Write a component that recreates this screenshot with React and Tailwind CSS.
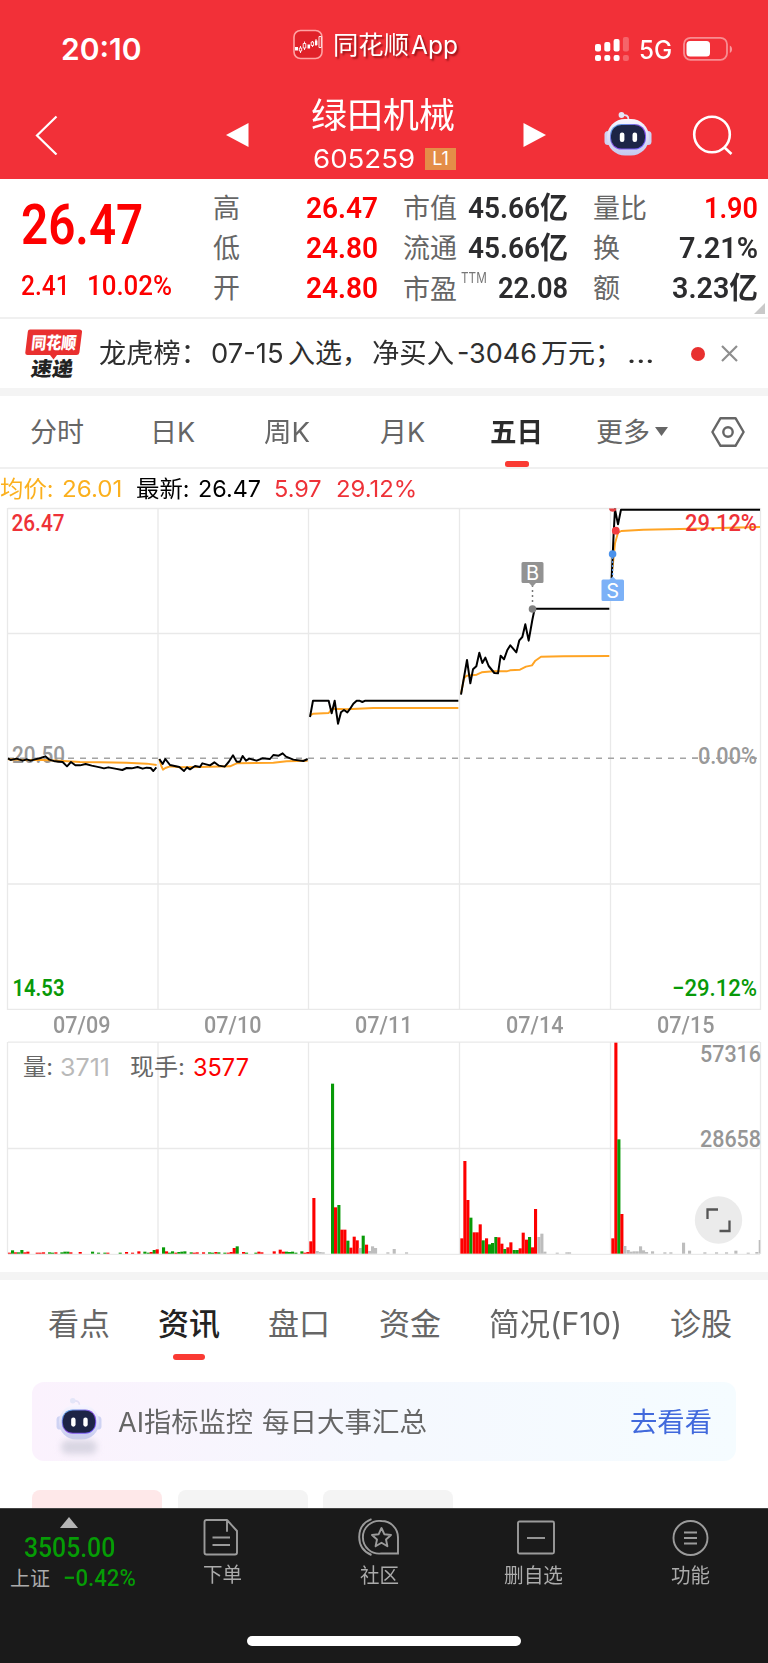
import { useLayoutEffect, useRef, useState } from 'react';

const SANS = "font-['Inter','Noto_Sans_CJK_SC',sans-serif]";
const DIN = "font-['Roboto','Noto_Sans_CJK_SC',sans-serif]";

// One line of text condensed or widened to the given width.
function Fit({ w, className = '', children }) {
  const ref = useRef(null);
  const [scale, setScale] = useState(1);
  useLayoutEffect(() => {
    const natural = ref.current.offsetWidth;
    if (natural) setScale(w / natural);
  }, [w]);
  return (
    <span className={`block shrink-0 whitespace-nowrap ${className}`} style={{ width: w }}>
      <span ref={ref} className="inline-block origin-left" style={{ transform: `scaleX(${scale})` }}>
        {children}
      </span>
    </span>
  );
}

function Robot({ className }) {
  return (
    <svg className={className} viewBox="0 0 48 46" fill="none">
      <defs>
        <linearGradient id="shell" x1="0" y1="0" x2="0" y2="1">
          <stop offset="0" stopColor="#f8f6ff" />
          <stop offset="1" stopColor="#c4c9ee" />
        </linearGradient>
        <linearGradient id="rim" x1="0" y1="0" x2="1" y2="1">
          <stop offset="0" stopColor="#55b9e8" />
          <stop offset="0.5" stopColor="#8a4be0" />
          <stop offset="1" stopColor="#6c63ff" />
        </linearGradient>
      </defs>
      <path d="M18 4.500c4-1 6.500 0 6.500 4" stroke="#e4e1f6" strokeWidth="1.800" />
      <circle cx="17.500" cy="4" r="2.900" fill="#e4e6f8" />
      <rect x="0.500" y="20" width="7" height="14" rx="3.500" fill="#cfd3f3" />
      <rect x="40.500" y="20" width="7" height="14" rx="3.500" fill="#cfd3f3" />
      <rect x="3" y="8" width="42" height="36.500" rx="18" fill="url(#shell)" />
      <rect x="6" y="13" width="36" height="25.500" rx="11.500" fill="url(#rim)" />
      <rect x="7" y="14" width="34" height="23.500" rx="10.500" fill="#1d2446" />
      <rect x="15.800" y="21.500" width="4.600" height="9.500" rx="2.200" fill="#fff" />
      <rect x="28.500" y="21.500" width="4.600" height="9.500" rx="2.200" fill="#fff" />
    </svg>
  );
}

function StatusBar() {
  return (
    <div className="flex h-[92px] items-start">
      <Fit w={81} className="ml-[61px] mt-[30px] text-[30px] font-semibold leading-[38px]">20:10</Fit>
      <svg className="ml-[151px] mt-[29px] h-[31px] w-[31px]" viewBox="0 0 31 31" fill="none">
        <rect x="1" y="1.500" width="28" height="28" rx="6.500" fill="#e02129" stroke="#ffa3a3" strokeWidth="1.600" />
        <path d="M7.500 17v7M11.500 12.500v8.500M19.500 12v6M23 10v7" stroke="#fff" strokeWidth="0.900" />
        <path d="M6.300 19h2.400v3H6.300zM10.200 14.500h2.600v4.500h-2.600zM18.200 13h2.400v3.500h-2.400zM26 7.500h2.300v11H26z" fill="#e02129" stroke="#fff" strokeWidth="0.900" />
        <path d="M2 18h3v3.500H2zM14.500 15.500h2.600v4h-2.600zM22 11.500h2.400v4.500H22z" fill="#fff" />
      </svg>
      <Fit w={76} className="ml-[9px] mt-[26px] text-[25px] leading-[38px] [text-shadow:2px_2px_2px_rgba(90,0,0,0.6)]">同花顺</Fit>
      <Fit w={47} className="ml-[2px] mt-[26px] text-[25px] leading-[38px] [text-shadow:2px_2px_2px_rgba(90,0,0,0.6)]">App</Fit>
      <svg className="ml-[137px] mt-[36px] h-[26px] w-[35px]" viewBox="0 0 35 26" fill="#fff">
        <rect x="0" y="8" width="6" height="7.500" rx="2" />
        <rect x="9.300" y="6" width="6" height="9.500" rx="2" />
        <rect x="18.600" y="3" width="6" height="12.500" rx="2" />
        <rect x="27.900" y="1" width="6" height="14.500" rx="2" opacity="0.25" />
        <rect x="0" y="19" width="6" height="6" rx="2" />
        <rect x="9.300" y="19" width="6" height="6" rx="2" />
        <rect x="18.600" y="19" width="6" height="6" rx="2" />
        <rect x="27.900" y="19" width="6" height="6" rx="2" opacity="0.25" />
      </svg>
      <Fit w={33} className="ml-[9px] mt-[31px] text-[25px] font-medium leading-[38px]">5G</Fit>
      <svg className="ml-[11px] mt-[35px] h-[26px] w-[50px]" viewBox="0 0 50 26" fill="none">
        <rect x="1" y="2.800" width="43" height="22" rx="6.500" stroke="#fff" strokeOpacity="0.45" strokeWidth="1.800" />
        <rect x="3.500" y="6" width="23.500" height="15.500" rx="3.500" fill="#fff" />
        <path d="M46.800 10.500c3 1.500 3 6 0 7.500z" fill="#fff" fillOpacity="0.5" />
      </svg>
    </div>
  );
}

function TitleBar() {
  return (
    <div className="flex h-[87px] items-start">
      <svg className="ml-[35px] mt-[23px] h-[40px] w-[24px]" viewBox="0 0 24 40" fill="none">
        <path d="M21.500 1.500L2 20.500 21.500 39.500" stroke="#fff" strokeWidth="2.200" />
      </svg>
      <svg className="ml-[166px] mt-[30px] h-[26px] w-[25px]" viewBox="0 0 25 26" fill="#fff">
        <path d="M1 13L23.500 1v24z" />
      </svg>
      <div className="ml-[61px] flex w-[146px] flex-col">
        <Fit w={144} className="mt-px text-[35px] leading-[44px]">绿田机械</Fit>
        <div className="flex items-start gap-[10px] pl-[2px]">
          <Fit w={102} className="mt-[9px] text-[26px] leading-[26px]">605259</Fit>
          <div className="mt-[11px] flex h-[22px] w-[31px] items-center justify-center bg-[#e48d48] text-[18px] leading-none">L1</div>
        </div>
      </div>
      <svg className="ml-[65px] mt-[30px] h-[26px] w-[25px]" viewBox="0 0 25 26" fill="#fff">
        <path d="M24 13L1.500 1v24z" />
      </svg>
      <Robot className="ml-[57px] mt-[19px] h-[46px] w-[48px]" />
      <svg className="ml-[40px] mt-[23px] h-[41px] w-[42px]" viewBox="0 0 42 41" fill="none" stroke="#fff" strokeWidth="2.600">
        <circle cx="20" cy="19.500" r="17.800" />
        <path d="M32.500 32.500l7 6.500" />
      </svg>
    </div>
  );
}

function Stat({ label, lw, value, vw, red, note, className = '' }) {
  return (
    <div className={`flex h-[40px] items-center justify-between ${className}`}>
      <div className="flex items-center pt-[4px]">
        <Fit w={lw} className={`text-[27px] text-[#666] ${note ? 'mt-[2px]' : ''}`}>{label}</Fit>
        {note && <Fit w={26} className="-mt-[24px] ml-[4px] text-[14px] text-[#777]">{note}</Fit>}
      </div>
      <Fit w={vw} className={`${DIN} text-[30px] font-semibold ${red ? 'text-[#fd0000]' : 'text-[#2c2c2e]'}`}>{value}</Fit>
    </div>
  );
}

function Quote() {
  return (
    <section className="flex h-[140px] items-start border-b-2 border-[#f0f0f0]">
      <div className={`${DIN} ml-[21px] w-[192px] text-[#fd0000]`}>
        <Fit w={122} className="mt-[12px] text-[55px] font-semibold leading-[68px]">26.47</Fit>
        <div className="mt-[12px] flex gap-[17px] text-[28px] font-medium leading-[30px]">
          <Fit w={49}>2.41</Fit>
          <Fit w={85}>10.02%</Fit>
        </div>
      </div>
      <div className="mt-[8px] w-[165px]">
        <Stat label="高" lw={27} value="26.47" vw={72} red />
        <Stat label="低" lw={27} value="24.80" vw={72} red />
        <Stat label="开" lw={27} value="24.80" vw={72} red />
      </div>
      <div className="ml-[25px] mt-[8px] w-[165px]">
        <Stat label="市值" lw={54} value="45.66亿" vw={100} />
        <Stat label="流通" lw={54} value="45.66亿" vw={100} />
        <Stat label="市盈" lw={54} value="22.08" vw={70} note="TTM" />
      </div>
      <div className="ml-[25px] mt-[8px] w-[165px]">
        <Stat label="量比" lw={54} value="1.90" vw={54} red />
        <Stat label="换" lw={27} value="7.21%" vw={79} />
        <Stat label="额" lw={27} value="3.23亿" vw={86} />
      </div>
      <svg className="-ml-[4px] mt-[124px] h-[11px] w-[11px] shrink-0" viewBox="0 0 11 11"><path d="M11 0v11H0z" fill="#c9c9c9" /></svg>
    </section>
  );
}

function News() {
  return (
    <section className="flex h-[69px] items-center text-[27px] text-[#2f2f2f]">
      <div className="ml-[24px] w-[58px]">
        <svg className="h-[52px] w-[58px]" viewBox="0 0 58 52">
          <path d="M6 1.500h49.500q2.800 0 2.500 2.500l-2.600 20.500q-.4 2.600-3 2.600H33l-3.500 4.500-3.500-4.500H3.500Q1 27.100 1.300 24.500L3.800 3.700Q4 1.500 6 1.500z" fill="#e9302f" />
          <text x="9" y="20.800" transform="skewX(-6)" fontSize="17" fontWeight="900" fill="#fff" textLength="45" lengthAdjust="spacingAndGlyphs">同花顺</text>
          <text x="13" y="48" transform="skewX(-8)" fontSize="20" fontWeight="900" fill="#222" textLength="42" lengthAdjust="spacingAndGlyphs">速递</text>
        </svg>
      </div>
      <Fit w={109} className="ml-[17px] mt-[2px]">龙虎榜：</Fit>
      <Fit w={73} className="ml-[3px] mt-[2px]">07-15</Fit>
      <Fit w={54} className="ml-[4px] mt-[2px]">入选</Fit>
      <Fit w={27} className="mt-[2px]">，</Fit>
      <Fit w={82} className="ml-[3px] mt-[2px]">净买入</Fit>
      <Fit w={80} className="ml-[3px] mt-[2px]">-3046</Fit>
      <Fit w={54} className="ml-[4px] mt-[2px]">万元</Fit>
      <Fit w={27} className="mt-[2px]">；</Fit>
      <Fit w={27} className="ml-[5px] mt-[2px]">...</Fit>
      <div className="ml-[37px] h-[14px] w-[14px] rounded-full bg-[#e8302f]" />
      <svg className="ml-[16px] h-[17px] w-[17px]" viewBox="0 0 17 17" stroke="#8e8e8e" strokeWidth="2.200"><path d="M1 1l15 15M16 1L1 16" /></svg>
    </section>
  );
}

function Periods() {
  return (
    <nav className="flex h-[73px] items-center border-b-2 border-[#f0f0f0] text-[27px] text-[#666]">
      <Fit w={54} className="ml-[30px] pt-[3px]">分时</Fit>
      <Fit w={45} className="ml-[66px] pt-[3px]">日K</Fit>
      <Fit w={46} className="ml-[69px] pt-[3px]">周K</Fit>
      <Fit w={45} className="ml-[70px] pt-[3px]">月K</Fit>
      <div className="ml-[65px] flex h-full flex-col items-center">
        <Fit w={53} className="pt-[17px] font-semibold text-[#2b2b2b]">五日</Fit>
        <div className="mt-auto h-[6px] w-[24px] rounded-[2.5px] bg-[#fa3a33]" />
      </div>
      <Fit w={54} className="ml-[53px] pt-[3px]">更多</Fit>
      <svg className="ml-[5px] h-[9px] w-[13px]" viewBox="0 0 13 9"><path d="M0 0h13L6.500 9z" fill="#666" /></svg>
      <svg className="ml-[43px] h-[32px] w-[34px]" viewBox="0 0 34 32" fill="none" stroke="#666" strokeWidth="2.400">
        <path d="M9.500 2.200h15L32.600 16l-8.100 13.800h-15L1.400 16z" strokeLinejoin="round" />
        <circle cx="17" cy="16" r="4.700" />
      </svg>
    </nav>
  );
}

function Legend() {
  return (
    <div className="flex h-[38px] items-center pt-[2px] text-[23px]">
      <Fit w={54} className="text-[#fbb01e]">均价:</Fit>
      <Fit w={60} className="ml-[8px] text-[#fbb01e]">26.01</Fit>
      <Fit w={54} className="ml-[14px] text-black">最新:</Fit>
      <Fit w={63} className="ml-[8px] text-black">26.47</Fit>
      <Fit w={48} className="ml-[13px] text-[#ee3238]">5.97</Fit>
      <Fit w={81} className="ml-[14px] text-[#ee3238]">29.12%</Fit>
    </div>
  );
}

function ChartText({ x, y, w, fill, weight = 500, size = 24, children }) {
  return (
    <text x={x} y={y} fill={fill} fontSize={size} fontWeight={weight} textLength={w} lengthAdjust="spacingAndGlyphs" className={DIN}>{children}</text>
  );
}

function PriceChart() {
  return (
    <svg className="block h-[503px] w-[768px]" viewBox="0 507 768 503" fill="none">
      <path d="M8 508.500H760M8 633.500H760M8 884H760M8 1009.500H760M7.500 508V1010M158 508V1010M308.500 508V1010M459.500 508V1010M610.500 508V1010M760.500 508V1010" stroke="#e9e9e9" strokeWidth="1.300" />
      <path d="M8 758.300H700" stroke="#a4a4a4" strokeWidth="1.500" strokeDasharray="6 6" />
      <ChartText x="12" y="762.500" w="53" fill="#999">20.50</ChartText>
      <g transform="translate(0 680) scale(.33333)" stroke="#ffa424" strokeWidth="5.800" strokeLinejoin="round">
        <path d="M24 238L70 240 130 240 190 243 240 246 300 247 380 248 440 251 470 255M478 238L484 258 489 269 496 264 510 259 540 262 600 261 690 259 710 250 820 248 860 244 923 242" />
      </g>
      <g transform="translate(0 680) scale(.33333)" stroke="#000" strokeWidth="5.800" strokeLinejoin="round">
        <path d="M24 235L32 240 50 236 68 242 80 238 92 242 105 238 122 234 136 229 148 239 165 244 188 246 201 259 213 246 226 256 240 256 257 252 275 257 300 262 312 265 325 262 345 266 367 270 380 264 395 265 413 261 428 266 440 263 452 264 460 273 469 262M478 237L488 252 496 237 510 255 524 258 538 261 552 273 561 262 570 268 585 258 600 261 607 250 630 256 643 247 657 257 674 260 686 246 699 226 710 245 720 245 728 228 738 242 748 236 770 242 787 235 810 237 820 225 836 227 848 220 858 230 880 239 910 243 923 237" />
      </g>
      <g transform="translate(280 500) scale(.33333)" stroke="#ffa424" strokeWidth="5.800" strokeLinejoin="round">
        <path d="M90 646L100 641 146 639 156 626 200 628 280 624 535 624M543 580L552 535 560 527 590 524 605 517 640 514 680 514 690 511 720 509 738 500 756 496 766 482 783 470 850 469 988 468M995 230L1005 130 1014 98 1024 93 1090 89 1200 87 1440 81" />
      </g>
      <ChartText x="685" y="530.500" w="72" fill="#ee3238">29.12%</ChartText>
      <path d="M692 758.300H757" stroke="#a4a4a4" strokeWidth="1.500" strokeDasharray="6 6" />
      <ChartText x="698" y="763.500" w="59" fill="#999">0.00%</ChartText>
      <ChartText x="11.500" y="530.500" w="53" fill="#ee3238">26.47</ChartText>
      <ChartText x="12.500" y="996" w="52" fill="#089908" weight={600}>14.53</ChartText>
      <ChartText x="672" y="996" w="85" fill="#089908">−29.12%</ChartText>
      <g transform="translate(280 500) scale(.33333)" stroke="#000" strokeWidth="6" strokeLinejoin="round">
        <path d="M90 651L99 602 146 602 155 640 164 602 174 671 183 637 192 630 202 637 210 627 220 611 230 602 238 602 247 606 256 602 535 602M543 584L561 480 571 550 579 508 589 499 598 458 607 489 616 473 626 498 643 519 654 520 662 467 672 478 682 450 691 436 709 457 718 421 727 411 736 373 746 422 757 360 764 326 988 326M995 235L1001 100 1005 28 1014 73 1023 29 1440 29" />
      </g>
      <path d="M532.500 585V603" stroke="#777" strokeWidth="1.500" strokeDasharray="2 3" />
      <circle cx="532.500" cy="609" r="3.800" fill="#808080" />
      <path d="M523 562h19q1.500 0 1.500 1.500v18q0 1.500-1.500 1.500h-6l-3.500 3.500-3.500-3.500H523q-1.500 0-1.500-1.500v-18q0-1.500 1.500-1.500z" fill="#929292" />
      <text x="532.500" y="580" textAnchor="middle" fontSize="20" fontWeight="400" fill="#fff">B</text>
      <path d="M612.600 557V577" stroke="#498fe9" strokeWidth="1.300" strokeDasharray="2 2" />
      <circle cx="612.600" cy="554" r="3.800" fill="#4b92eb" />
      <circle cx="615.800" cy="530.700" r="3.900" fill="#f23c40" />
      <path d="M609 508.500h7.500a3.800 3.800 0 0 1-7.500 0z" fill="#e34042" />
      <path d="M603 579.500h6.500l3.200-3 3.200 3h6.600q1.500 0 1.500 1.500v18.500q0 1.500-1.500 1.500H603q-1.500 0-1.500-1.500V581q0-1.500 1.500-1.500z" fill="#7cb1f7" />
      <text x="612.700" y="597.700" textAnchor="middle" fontSize="20" fontWeight="400" fill="#fff">S</text>
    </svg>
  );
}

function Dates() {
  return (
    <div className={`${DIN} flex h-[31px] items-center gap-[93.500px] pb-[2px] pl-[53px] text-[24px] font-medium text-[#969696]`}>
      {['07/09', '07/10', '07/11', '07/14', '07/15'].map((d) => <Fit key={d} w={57.5}>{d}</Fit>)}
    </div>
  );
}

// [left, top, colour]: thirds of a pixel, top measured from y = 970.
const BARS = [
  [24, 848, 'r'], [33, 841, 'g'], [42, 847, 'r'], [51, 847, 'g'], [61, 840, 'g'], [70, 847, 'r'], [79, 845, 'r'], [107, 848, 'r'], [116, 848, 'r'], [126, 847, 'r'], [144, 847, 'g'], [153, 848, 'g'], [163, 847, 'r'], [181, 847, 'g'], [190, 845, 'g'], [199, 845, 'g'], [208, 847, 'r'], [236, 846, 'r'], [273, 845, 'g'], [291, 848, 'g'], [310, 848, 'g'], [319, 848, 'r'], [356, 848, 'g'], [375, 846, 'r'], [393, 848, 'r'], [412, 844, 'r'], [430, 845, 'g'], [440, 848, 'g'], [449, 846, 'r'], [458, 840, 'g'], [467, 838, 'r'],
  [486, 832, 'g'], [495, 844, 'r'], [504, 848, 'g'], [513, 844, 'g'], [523, 848, 'r'], [532, 846, 'g'], [541, 845, 'g'], [550, 844, 'g'], [569, 847, 'g'], [578, 848, 'r'], [587, 847, 'r'], [606, 847, 'r'], [624, 847, 'g'], [633, 848, 'g'], [643, 846, 'r'], [652, 847, 'g'], [670, 848, 'g'], [680, 848, 'r'], [689, 846, 'r'], [698, 834, 'r'], [707, 829, 'g'], [726, 846, 'r'], [735, 848, 'g'], [763, 848, 'g'], [772, 845, 'r'], [781, 847, 'r'], [818, 844, 'r'], [836, 839, 'r'], [846, 845, 'r'], [855, 845, 'g'], [864, 846, 'g'], [873, 845, 'g'], [883, 848, 'g'], [901, 844, 'g'], [910, 848, 'r'], [919, 846, 'r'],
  [928, 814, 'r'], [937, 684, 'r'], [947, 843, 'x'], [956, 846, 'x'], [965, 847, 'x'], [993, 341, 'g'], [1002, 712, 'r'], [1012, 705, 'g'], [1021, 779, 'r'], [1030, 779, 'r'], [1039, 812, 'g'], [1048, 833, 'r'], [1058, 800, 'r'], [1067, 811, 'r'], [1076, 834, 'x'], [1085, 797, 'g'], [1095, 824, 'r'], [1104, 843, 'x'], [1113, 829, 'x'], [1122, 834, 'x'], [1159, 847, 'x'], [1178, 837, 'x'], [1215, 847, 'x'],
  [1381, 805, 'r'], [1390, 573, 'r'], [1399, 690, 'r'], [1408, 743, 'g'], [1418, 787, 'r'], [1427, 787, 'r'], [1436, 763, 'r'], [1445, 811, 'g'], [1455, 805, 'r'], [1464, 823, 'g'], [1473, 819, 'g'], [1483, 801, 'g'], [1492, 802, 'r'], [1501, 821, 'r'], [1510, 837, 'g'], [1519, 832, 'r'], [1528, 817, 'r'], [1538, 840, 'g'], [1547, 840, 'g'], [1556, 835, 'r'], [1565, 788, 'r'], [1575, 809, 'r'], [1584, 801, 'g'], [1593, 832, 'r'], [1602, 717, 'r'], [1612, 801, 'x'], [1621, 791, 'x'], [1630, 845, 'x'], [1667, 848, 'x'], [1696, 847, 'x'], [1704, 847, 'x'],
  [1834, 805, 'r'], [1843, 218, 'r'], [1852, 508, 'g'], [1861, 732, 'r'], [1870, 828, 'x'], [1880, 840, 'x'], [1889, 845, 'x'], [1898, 844, 'x'], [1907, 844, 'x'], [1917, 829, 'x'], [1926, 841, 'x'], [1935, 846, 'x'], [1953, 844, 'x'], [1990, 847, 'x'], [2008, 847, 'x'], [2046, 818, 'x'], [2064, 842, 'x'], [2110, 847, 'x'], [2145, 847, 'x'], [2175, 847, 'x'], [2203, 842, 'x'], [2240, 848, 'x'], [2266, 846, 'x'],
];
const BAR_COLOURS = { r: '#fd0000', g: '#089a08', x: '#bdbdbd' };

function VolumeChart() {
  return (
    <svg className="block h-[231px] w-[768px]" viewBox="0 1041 768 231" fill="none">
      <path d="M8 1042.200H760M8 1148.500H760M8 1254.300H760M7.500 1042V1254M158 1042V1254M308.500 1042V1254M459.500 1042V1254M610.500 1042V1254M760.500 1042V1254" stroke="#e9e9e9" strokeWidth="1.300" />
      {BARS.map(([x, top, c], i) => (
        <rect key={i} x={x / 3} y={970 + top / 3} width="3.100" height={(851 - top) / 3} fill={BAR_COLOURS[c]} />
      ))}
      <rect x="758.700" y="1240" width="1.500" height="13.500" fill="#bdbdbd" />
      <text x="23" y="1075" fontSize="23" fill="#666" textLength="30" lengthAdjust="spacingAndGlyphs">量:</text>
      <text x="60" y="1075.500" fontSize="24" fill="#b9b9b9" textLength="50" lengthAdjust="spacingAndGlyphs">3711</text>
      <text x="130" y="1075" fontSize="23" fill="#666" textLength="55" lengthAdjust="spacingAndGlyphs">现手:</text>
      <text x="193" y="1075.500" fontSize="24" fill="#fd0000" textLength="56" lengthAdjust="spacingAndGlyphs">3577</text>
      <ChartText x="700" y="1061.500" w="61" fill="#969696">57316</ChartText>
      <ChartText x="700" y="1147" w="61" fill="#969696">28658</ChartText>
      <circle cx="718.500" cy="1220" r="23.700" fill="#ebebeb" />
      <path d="M707.500 1219v-9.500h10.500M719.500 1231h10v-10.500" stroke="#555" strokeWidth="2.300" />
    </svg>
  );
}

function Sections() {
  return (
    <nav className="flex h-[102px] items-start text-[31px] leading-[44px] text-[#666]">
      <Fit w={62} className="ml-[48px] mt-[22px]">看点</Fit>
      <div className="ml-[48px] mt-[22px] flex flex-col items-center">
        <Fit w={62} className="font-medium text-[#222]">资讯</Fit>
        <div className="mt-[8px] h-[6px] w-[32px] rounded-[3px] bg-[#fa3a33]" />
      </div>
      <Fit w={62} className="ml-[48px] mt-[22px]">盘口</Fit>
      <Fit w={62} className="ml-[49px] mt-[22px]">资金</Fit>
      <Fit w={133} className="ml-[48px] mt-[22px]">简况(F10)</Fit>
      <Fit w={62} className="ml-[48px] mt-[22px]">诊股</Fit>
    </nav>
  );
}

function Feed() {
  return (
    <section className="flex h-[126px] flex-col pl-[32px]">
      <div className="flex h-[79px] w-[704px] shrink-0 items-center rounded-[12px] bg-linear-to-r from-[#fbf2fd] via-[#f5f8fe] to-[#f5fcff] text-[27px]">
        <div className="ml-[24px] flex w-[46px] flex-col items-center pt-[7px]">
          <Robot className="h-[44px] w-[46px]" />
          <div className="-mt-px h-[14px] w-[36px] rounded-full bg-[#d9d6e3] blur-[3px]" />
        </div>
        <Fit w={135} className="ml-[16px] mt-[4px] text-[#666]">AI指标监控</Fit>
        <Fit w={165} className="ml-[9px] mt-[4px] text-[#666]">每日大事汇总</Fit>
        <Fit w={82} className="ml-[203px] mt-[4px] text-[#4169dc]">去看看</Fit>
      </div>
      <div className="mt-auto flex h-[18px] gap-[15.500px]">
        <div className="w-[130px] rounded-t-[8px] bg-[#fee8e9]" />
        <div className="w-[130px] rounded-t-[8px] bg-[#f4f4f4]" />
        <div className="w-[130px] rounded-t-[8px] bg-[#f4f4f4]" />
      </div>
    </section>
  );
}

function Dock() {
  return (
    <footer className="flex h-[155px] flex-col border-t border-[#444] bg-[#1a1a1a] text-[#ababab]">
      <div className="flex h-[127px] items-start">
        <div className="ml-[10px] flex w-[128px] flex-col">
          <svg className="ml-[50px] mt-[8px] h-[11px] w-[18px]" viewBox="0 0 18 11"><path d="M9 0l9 11H0z" fill="#b5b5b5" /></svg>
          <Fit w={91} className={`${DIN} ml-[14px] mt-[4px] text-[28px] font-medium leading-[32px] text-[#069c06]`}>3505.00</Fit>
          <div className="flex items-start leading-[30px]">
            <Fit w={40} className="text-[20px]">上证</Fit>
            <Fit w={73} className={`${DIN} -mt-px ml-[13px] text-[24px] font-medium text-[#069c06]`}>−0.42%</Fit>
          </div>
        </div>
        <div className="ml-[65px] mt-[9px] flex flex-col items-start gap-[5px]">
          <svg className="h-[38px] w-[36px]" viewBox="0 0 36 38" fill="none" stroke="#9b9b9b" strokeWidth="1.900">
            <path d="M24 2H3.500Q1.500 2 1.500 4V34.500Q1.500 36.500 3.500 36.500H32Q34 36.500 34 34.500V13zV13H24zM9.500 19.500H27M9.500 27H27" strokeLinejoin="round" />
          </svg>
          <Fit w={39} className="text-[20px] leading-[28px]">下单</Fit>
        </div>
        <div className="ml-[116px] mt-[9px] flex flex-col items-center gap-[6px]">
          <svg className="h-[38px] w-[42px]" viewBox="0 0 42 38" fill="none" stroke="#9b9b9b" strokeWidth="1.900">
            <path d="M13.500 1.200C5 4.500 1.200 11.500 1.200 19S5 33.500 13.500 37" />
            <path d="M23.500 3A16.400 16.400 0 1 0 23.500 35.500H40V19.500A16.400 16.400 0 0 0 23.500 3z" />
            <path d="M23.500 10l2.800 6.200 6.700.8-5 4.500 1.400 6.700-5.900-3.400-5.900 3.400 1.400-6.700-5-4.500 6.700-.8z" strokeLinejoin="round" />
          </svg>
          <Fit w={39} className="ml-px text-[20px] leading-[28px]">社区</Fit>
        </div>
        <div className="ml-[104px] mt-[11px] flex flex-col items-center gap-[7px]">
          <svg className="ml-[4px] h-[35px] w-[38px]" viewBox="0 0 38 35" fill="none" stroke="#9b9b9b" strokeWidth="1.900">
            <rect x="1" y="1.500" width="36" height="32" rx="1.500" /><path d="M10 18h18" />
          </svg>
          <Fit w={59} className="text-[20px] leading-[28px]">删自选</Fit>
        </div>
        <div className="ml-[108px] mt-[11px] flex flex-col items-center gap-[6px]">
          <svg className="h-[36px] w-[37px]" viewBox="0 0 37 36" fill="none" stroke="#9b9b9b" strokeWidth="1.900">
            <circle cx="18.500" cy="18" r="17" /><path d="M12 12.500h13M12 18h13M12 23.500h13" />
          </svg>
          <Fit w={39} className="text-[20px] leading-[28px]">功能</Fit>
        </div>
      </div>
      <div className="mx-auto h-[10px] w-[274px] rounded-full bg-white" />
    </footer>
  );
}

export default function App() {
  return (
    <main className={`${SANS} h-[1663px] w-[768px] overflow-hidden bg-white`}>
      <header className="bg-[#f23038] text-white">
        <StatusBar />
        <TitleBar />
      </header>
      <Quote />
      <News />
      <div className="h-[8px] bg-[#f4f4f4]" />
      <Periods />
      <Legend />
      <PriceChart />
      <Dates />
      <VolumeChart />
      <div className="h-[8px] bg-[#f4f4f4]" />
      <Sections />
      <Feed />
      <Dock />
    </main>
  );
}
